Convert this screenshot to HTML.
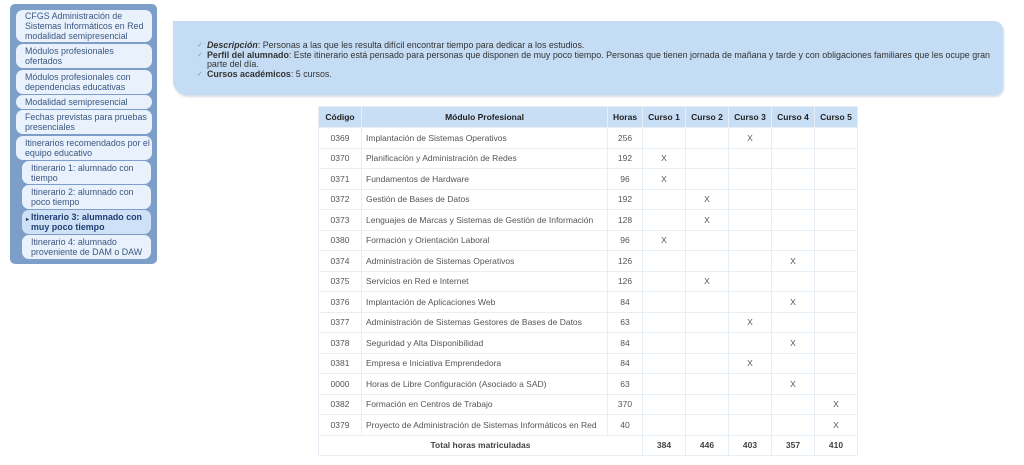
<!DOCTYPE html>
<html><head><meta charset="utf-8"><style>
body{margin:0;width:1024px;height:465px;background:#fff;font-family:"Liberation Sans",sans-serif;position:relative;overflow:hidden}
#side{position:absolute;left:10px;top:4px;width:147px;height:260px;background:#7d9ec8;border-radius:5px}
.it{position:absolute;background:#e9f2fc;border-radius:7px;font-size:8.9px;line-height:10px;color:#3b5680;padding:0 2px 0 9px;box-sizing:border-box;display:flex;align-items:center}
.sub{padding-left:9px}
.sel{background:#cfe1f6;font-weight:bold;color:#1f3f73;padding-left:4px}
#info{position:absolute;left:173px;top:21px;width:830px;height:74px;background:#c4dcf4;border-radius:0 9px 9px 14px;box-shadow:1px 2px 2px #d6dde6}
#info ul{margin:0;padding:0;list-style:none;position:absolute;left:24px;top:20px;right:12px;font-size:8.9px;line-height:9.7px;color:#333}
#info li{padding-left:10px;position:relative}
#info li:before{content:"✓";position:absolute;left:0;color:#8a9bb0;font-size:7px}
table{position:absolute;left:318px;top:106px;border-collapse:separate;border-spacing:1px;background:#e8eef5;font-size:8.5px;color:#555}
td,th{background:#fff;height:19.5px;padding:0;text-align:center}
th{background:#c8def5;color:#222;font-weight:bold;height:20px}
td.l{text-align:left;padding-left:4px}
tr.t td{font-weight:bold;color:#444}
</style></head><body>
<div id="side">
<div class="it" style="left:6px;top:6px;width:136px;height:32px">CFGS Administración de Sistemas Informáticos en Red modalidad semipresencial</div>
<div class="it" style="left:6px;top:40px;width:136px;height:24px">Módulos profesionales ofertados</div>
<div class="it" style="left:6px;top:66px;width:136px;height:24px">Módulos profesionales con dependencias educativas</div>
<div class="it" style="left:6px;top:91px;width:136px;height:14px">Modalidad semipresencial</div>
<div class="it" style="left:6px;top:106px;width:136px;height:24px">Fechas previstas para pruebas presenciales</div>
<div class="it" style="left:6px;top:132px;width:136px;height:24px">Itinerarios recomendados por el equipo educativo</div>
<div class="it sub" style="left:12px;top:157px;width:129px;height:23px">Itinerario 1: alumnado con tiempo</div>
<div class="it sub" style="left:12px;top:181px;width:129px;height:24px">Itinerario 2: alumnado con poco tiempo</div>
<div class="it sel" style="left:12px;top:206px;width:129px;height:24px"><span style="font-size:6px;margin-right:2px;align-self:flex-start;margin-top:5px">▸</span><span>Itinerario 3: alumnado con muy poco tiempo</span></div>
<div class="it sub" style="left:12px;top:231px;width:129px;height:24px">Itinerario 4: alumnado proveniente de DAM o DAW</div>
</div>
<div id="info"><ul>
<li><b><i>Descripción</i></b>: Personas a las que les resulta difícil encontrar tiempo para dedicar a los estudios.</li>
<li><b>Perfil del alumnado</b>: Este itinerario está pensado para personas que disponen de muy poco tiempo. Personas que tienen jornada de mañana y tarde y con obligaciones familiares que les ocupe gran parte del día.</li>
<li><b>Cursos académicos</b>: 5 cursos.</li>
</ul></div>
<table>
<tr><th style="width:42px">Código</th><th style="width:245px">Módulo Profesional</th><th style="width:34px">Horas</th><th style="width:42px">Curso 1</th><th style="width:42px">Curso 2</th><th style="width:42px">Curso 3</th><th style="width:42px">Curso 4</th><th style="width:42px">Curso 5</th></tr>
<tr><td>0369</td><td class="l">Implantación de Sistemas Operativos</td><td>256</td><td></td><td></td><td>X</td><td></td><td></td></tr>
<tr><td>0370</td><td class="l">Planificación y Administración de Redes</td><td>192</td><td>X</td><td></td><td></td><td></td><td></td></tr>
<tr><td>0371</td><td class="l">Fundamentos de Hardware</td><td>96</td><td>X</td><td></td><td></td><td></td><td></td></tr>
<tr><td>0372</td><td class="l">Gestión de Bases de Datos</td><td>192</td><td></td><td>X</td><td></td><td></td><td></td></tr>
<tr><td>0373</td><td class="l">Lenguajes de Marcas y Sistemas de Gestión de Información</td><td>128</td><td></td><td>X</td><td></td><td></td><td></td></tr>
<tr><td>0380</td><td class="l">Formación y Orientación Laboral</td><td>96</td><td>X</td><td></td><td></td><td></td><td></td></tr>
<tr><td>0374</td><td class="l">Administración de Sistemas Operativos</td><td>126</td><td></td><td></td><td></td><td>X</td><td></td></tr>
<tr><td>0375</td><td class="l">Servicios en Red e Internet</td><td>126</td><td></td><td>X</td><td></td><td></td><td></td></tr>
<tr><td>0376</td><td class="l">Implantación de Aplicaciones Web</td><td>84</td><td></td><td></td><td></td><td>X</td><td></td></tr>
<tr><td>0377</td><td class="l">Administración de Sistemas Gestores de Bases de Datos</td><td>63</td><td></td><td></td><td>X</td><td></td><td></td></tr>
<tr><td>0378</td><td class="l">Seguridad y Alta Disponibilidad</td><td>84</td><td></td><td></td><td></td><td>X</td><td></td></tr>
<tr><td>0381</td><td class="l">Empresa e Iniciativa Emprendedora</td><td>84</td><td></td><td></td><td>X</td><td></td><td></td></tr>
<tr><td>0000</td><td class="l">Horas de Libre Configuración (Asociado a SAD)</td><td>63</td><td></td><td></td><td></td><td>X</td><td></td></tr>
<tr><td>0382</td><td class="l">Formación en Centros de Trabajo</td><td>370</td><td></td><td></td><td></td><td></td><td>X</td></tr>
<tr><td>0379</td><td class="l">Proyecto de Administración de Sistemas Informáticos en Red</td><td>40</td><td></td><td></td><td></td><td></td><td>X</td></tr>
<tr class="t"><td colspan="3">Total horas matriculadas</td><td>384</td><td>446</td><td>403</td><td>357</td><td>410</td></tr>
</table>
</body></html>
